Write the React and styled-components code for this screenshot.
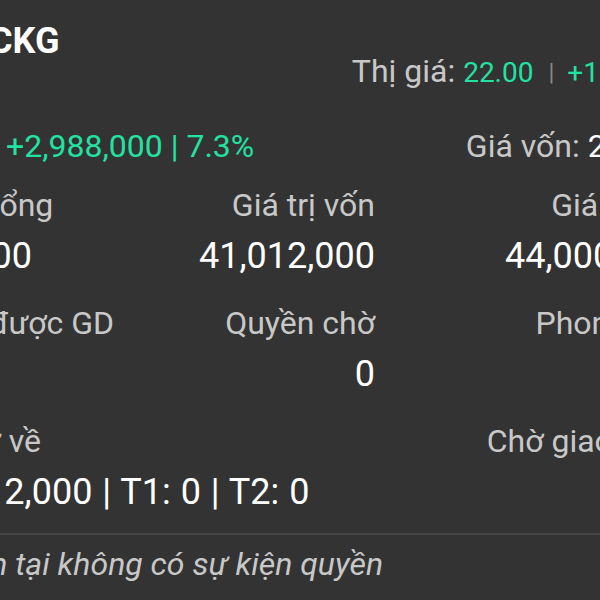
import React from 'react';
import styled, { createGlobalStyle } from 'styled-components';

const GlobalStyle = createGlobalStyle`
  html, body {
    margin: 0;
    padding: 0;
    background: #333333;
  }
  body {
    font-family: Roboto, "Noto Sans", sans-serif;
  }
`;

const Viewport = styled.div`
  width: 600px;
  height: 600px;
  overflow: hidden;
  background: #333333;
`;

const Screen = styled.div`
  width: 737px;
  margin-left: -56px;
  padding-top: 21px;
`;

const TopRow = styled.div`
  display: flex;
  justify-content: space-between;
  align-items: flex-start;
  height: 69px;
`;

const Title = styled.div`
  margin-left: 45px;
  font-size: 36px;
  font-weight: 700;
  line-height: 40px;
  color: #ffffff;
`;

const PriceLine = styled.div`
  margin-top: 32px;
  font-size: 32px;
  line-height: 36px;
  color: #c8c8c8;
  white-space: nowrap;
`;

const Green = styled.span`
  color: #22e2a2;
  font-size: ${p => p.small ? '28px' : 'inherit'};
`;

const Sep = styled.span`
  display: inline-block;
  margin: 0 13px 0 15px;
  color: #8a8a8a;
  font-size: 24px;
  vertical-align: 2px;
`;

const SummaryRow = styled.div`
  display: flex;
  justify-content: space-between;
  align-items: baseline;
  margin-top: 37px;
  font-size: 32px;
  line-height: 38px;
  color: #c8c8c8;
  white-space: nowrap;
`;

const Prefix = styled.span`
  margin-right: 4px;
`;

const Cost = styled.span`
  margin-right: -5px;
`;

const White = styled.span`
  color: #ffffff;
`;

const Grid = styled.div`
  display: grid;
  grid-template-columns: 215px 216px 306px;
  row-gap: 27px;
  margin-top: 21px;
`;

const Cell = styled.div`
  grid-column: ${p => p.col} / span ${p => p.span || 1};
  text-align: ${p => p.right ? 'right' : 'left'};
  white-space: nowrap;
`;

const Label = styled.div`
  font-size: 32px;
  line-height: 38px;
  color: #c8c8c8;
`;

const Value = styled.div`
  margin-top: 11px;
  font-size: 36px;
  line-height: 42px;
  color: #ffffff;
  min-height: 42px;
  word-spacing: ${p => p.wide ? '1px' : '0'};
`;

const Divider = styled.div`
  margin-top: 20px;
  height: 2px;
  background: #454545;
`;

const Notice = styled.div`
  padding-top: 10px;
  font-size: 32px;
  line-height: 38px;
  font-style: italic;
  color: #c8c8c8;
  white-space: nowrap;
`;

const cells = [
  { col: 1, label: 'KL tổng', value: '2,000' },
  { col: 2, label: 'Giá trị vốn', value: '41,012,000', right: true },
  { col: 3, label: 'Giá trị TT', value: '44,000,000', right: true },
  { col: 1, label: 'KL được GD', value: '0' },
  { col: 2, label: 'Quyền chờ', value: '0', right: true },
  { col: 3, label: 'Phong tỏa', value: '0', right: true },
  { col: 1, span: 2, label: 'Chờ về', value: 'T0: 2,000 | T1: 0 | T2: 0', wide: true },
  { col: 3, label: 'Chờ giao dịch', value: '0', right: true },
];

export default function App() {
  return (
    <Viewport>
      <GlobalStyle />
      <Screen>
        <TopRow>
          <Title>CKG</Title>
          <PriceLine>
            Thị giá: <Green small>22.00</Green>
            <Sep>|</Sep>
            <Green small>+1.00 5%</Green>
          </PriceLine>
        </TopRow>
        <SummaryRow>
          <span>
            <Prefix>Lãi:</Prefix> <Green>+2,988,000 | 7.3%</Green>
          </span>
          <Cost>
            Giá vốn: <White>20.506</White>
          </Cost>
        </SummaryRow>
        <Grid>
          {cells.map((c, i) => (
            <Cell key={i} col={c.col} span={c.span} right={c.right}>
              <Label>{c.label}</Label>
              <Value wide={c.wide}>{c.value}</Value>
            </Cell>
          ))}
        </Grid>
        <Divider />
        <Notice>Hiện tại không có sự kiện quyền</Notice>
      </Screen>
    </Viewport>
  );
}
